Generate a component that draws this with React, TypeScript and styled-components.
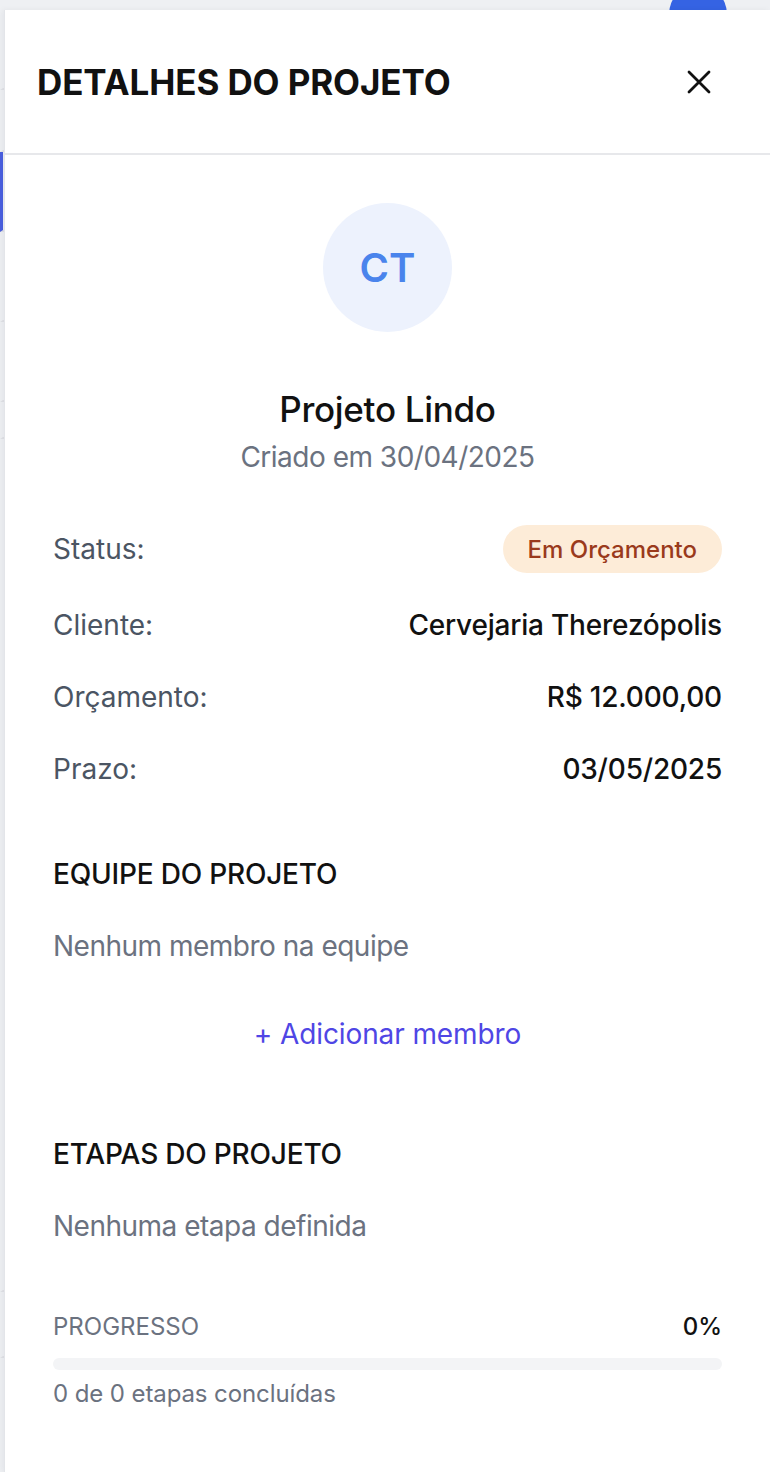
import React from "react";
import styled, { createGlobalStyle } from "styled-components";

const GlobalStyle = createGlobalStyle`
  html, body { margin: 0; padding: 0; }
  body {
    font-family: Inter, "Noto Sans", "Liberation Sans", sans-serif;
    background: #f9fafb;
    -webkit-font-smoothing: antialiased;
  }
  * { box-sizing: border-box; }
`;

const Screen = styled.div`
  position: relative;
  width: 770px;
  height: 1472px;
  overflow: hidden;
  background: #f9fafb;
`;

/* Page that lies behind the drawer */
const BehindPage = styled.div`
  display: flex;
  flex-direction: column;
  width: 100%;
  height: 100%;
  background: #eef0f3;
`;

const BehindRow = styled.div<{ $h: number; $active?: boolean }>`
  height: ${(p) => p.$h}px;
  flex-shrink: 0;
  border-bottom: 2px solid #e0e2e6;
  border-left: 3px solid ${(p) => (p.$active ? "#4a5fe0" : "transparent")};
`;

const BehindAvatar = styled.div`
  position: absolute;
  top: -15px;
  left: 669px;
  width: 58px;
  height: 58px;
  border-radius: 50%;
  background: #3563e3;
`;

const Drawer = styled.aside`
  position: absolute;
  top: 10px;
  left: 4px;
  right: 0;
  bottom: 0;
  background: #ffffff;
  border-left: 1px solid #e3e5e9;
  box-shadow: -2px 0 6px rgba(17, 24, 39, 0.05);
  display: flex;
  flex-direction: column;
`;

const Header = styled.header`
  height: 145px;
  flex-shrink: 0;
  display: flex;
  align-items: center;
  justify-content: space-between;
  padding: 0 57px 0 32px;
  border-bottom: 2px solid #e7e8eb;
`;

const Title = styled.h2`
  margin: 0;
  font-size: 35px;
  line-height: 48px;
  font-weight: 700;
  color: #111111;
  letter-spacing: -0.1px;
`;

const CloseButton = styled.button`
  display: flex;
  align-items: center;
  justify-content: center;
  width: 28px;
  height: 28px;
  padding: 0;
  border: none;
  background: transparent;
  cursor: pointer;
  color: #111111;
`;

const Body = styled.div`
  flex: 1;
  display: flex;
  flex-direction: column;
  padding: 48px 48px 0 48px;
`;

const Profile = styled.div`
  display: flex;
  flex-direction: column;
  align-items: center;
`;

const Avatar = styled.div`
  width: 129px;
  height: 129px;
  border-radius: 50%;
  background: #edf2fd;
  color: #4a84ec;
  display: flex;
  align-items: center;
  justify-content: center;
  font-size: 40px;
  font-weight: 600;
  margin-bottom: 49px;
`;

const ProjectName = styled.h3`
  margin: 0;
  font-size: 35px;
  line-height: 56px;
  font-weight: 500;
  color: #111111;
  letter-spacing: -0.3px;
`;

const CreatedAt = styled.p`
  margin: 0;
  font-size: 28px;
  line-height: 40px;
  color: #6b7280;
  letter-spacing: -0.5px;
`;

const InfoList = styled.dl`
  margin: 48px 0 0 0;
  display: flex;
  flex-direction: column;
  gap: 32px;
`;

const InfoRow = styled.div`
  display: flex;
  align-items: center;
  justify-content: space-between;
  min-height: 40px;
`;

const Label = styled.dt`
  font-size: 28px;
  line-height: 40px;
  color: #4b5563;
`;

const Value = styled.dd`
  margin: 0;
  font-size: 28px;
  line-height: 40px;
  font-weight: 500;
  color: #111111;
  letter-spacing: -0.2px;
`;

const Badge = styled.span`
  display: inline-flex;
  align-items: center;
  height: 48px;
  padding: 0 25px;
  border-radius: 999px;
  background: #fdecd8;
  color: #9a3a1c;
  font-size: 24px;
  font-weight: 500;
`;

const Section = styled.section<{ $top: number }>`
  margin-top: ${(p) => p.$top}px;
  display: flex;
  flex-direction: column;
`;

const SectionTitle = styled.h4`
  margin: 0 0 32px 0;
  font-size: 28px;
  line-height: 40px;
  font-weight: 500;
  color: #111111;
  text-transform: uppercase;
  letter-spacing: -0.2px;
`;

const EmptyText = styled.p`
  margin: 0;
  font-size: 28px;
  line-height: 40px;
  color: #6b7280;
  letter-spacing: -0.5px;
`;

const AddButton = styled.button`
  align-self: center;
  margin-top: 48px;
  padding: 0;
  border: none;
  background: transparent;
  font-family: inherit;
  font-size: 28px;
  line-height: 40px;
  color: #4f46e5;
  letter-spacing: -0.1px;
  cursor: pointer;
`;

const ProgressHead = styled.div`
  display: flex;
  justify-content: space-between;
  align-items: center;
  font-size: 24px;
  line-height: 32px;
`;

const ProgressLabel = styled.span`
  color: #6b7280;
  text-transform: uppercase;
`;

const ProgressValue = styled.span`
  color: #111111;
  font-weight: 500;
`;

const Track = styled.div`
  margin-top: 15px;
  height: 12px;
  border-radius: 999px;
  background: #f3f4f6;
  overflow: hidden;
`;

const Fill = styled.div`
  height: 100%;
  background: #4f46e5;
  border-radius: 999px;
`;

const ProgressNote = styled.p`
  margin: 8px 0 0 0;
  font-size: 24px;
  line-height: 32px;
  color: #6b7280;
  letter-spacing: -0.1px;
`;

const rows: { h: number; active?: boolean }[] = [
  { h: 90 },
  { h: 62 },
  { h: 80, active: true },
  { h: 90 },
  { h: 80 },
  { h: 37 },
  { h: 853 },
  { h: 66 },
];

const info = [
  { label: "Cliente:", value: "Cervejaria Therezópolis" },
  { label: "Orçamento:", value: "R$ 12.000,00" },
  { label: "Prazo:", value: "03/05/2025" },
];

export default function App() {
  const progress = 0;
  return (
    <>
      <GlobalStyle />
      <Screen>
        <BehindPage>
          {rows.map((r, i) => (
            <BehindRow key={i} $h={r.h} $active={r.active} />
          ))}
        </BehindPage>
        <BehindAvatar />
        <Drawer>
          <Header>
            <Title>DETALHES DO PROJETO</Title>
            <CloseButton aria-label="Fechar">
              <svg width="24" height="24" viewBox="0 0 24 24" fill="none">
                <path
                  d="M2 2 L22 22 M22 2 L2 22"
                  stroke="currentColor"
                  strokeWidth="2.8"
                  strokeLinecap="round"
                />
              </svg>
            </CloseButton>
          </Header>
          <Body>
            <Profile>
              <Avatar>CT</Avatar>
              <ProjectName>Projeto Lindo</ProjectName>
              <CreatedAt>Criado em 30/04/2025</CreatedAt>
            </Profile>
            <InfoList>
              <InfoRow>
                <Label>Status:</Label>
                <Badge>Em Orçamento</Badge>
              </InfoRow>
              {info.map((it) => (
                <InfoRow key={it.label}>
                  <Label>{it.label}</Label>
                  <Value>{it.value}</Value>
                </InfoRow>
              ))}
            </InfoList>
            <Section $top={65}>
              <SectionTitle>Equipe do Projeto</SectionTitle>
              <EmptyText>Nenhum membro na equipe</EmptyText>
              <AddButton>+ Adicionar membro</AddButton>
            </Section>
            <Section $top={80}>
              <SectionTitle>Etapas do Projeto</SectionTitle>
              <EmptyText>Nenhuma etapa definida</EmptyText>
            </Section>
            <Section $top={65}>
              <ProgressHead>
                <ProgressLabel>Progresso</ProgressLabel>
                <ProgressValue>{progress}%</ProgressValue>
              </ProgressHead>
              <Track>
                <Fill style={{ width: `${progress}%` }} />
              </Track>
              <ProgressNote>0 de 0 etapas concluídas</ProgressNote>
            </Section>
          </Body>
        </Drawer>
      </Screen>
    </>
  );
}
